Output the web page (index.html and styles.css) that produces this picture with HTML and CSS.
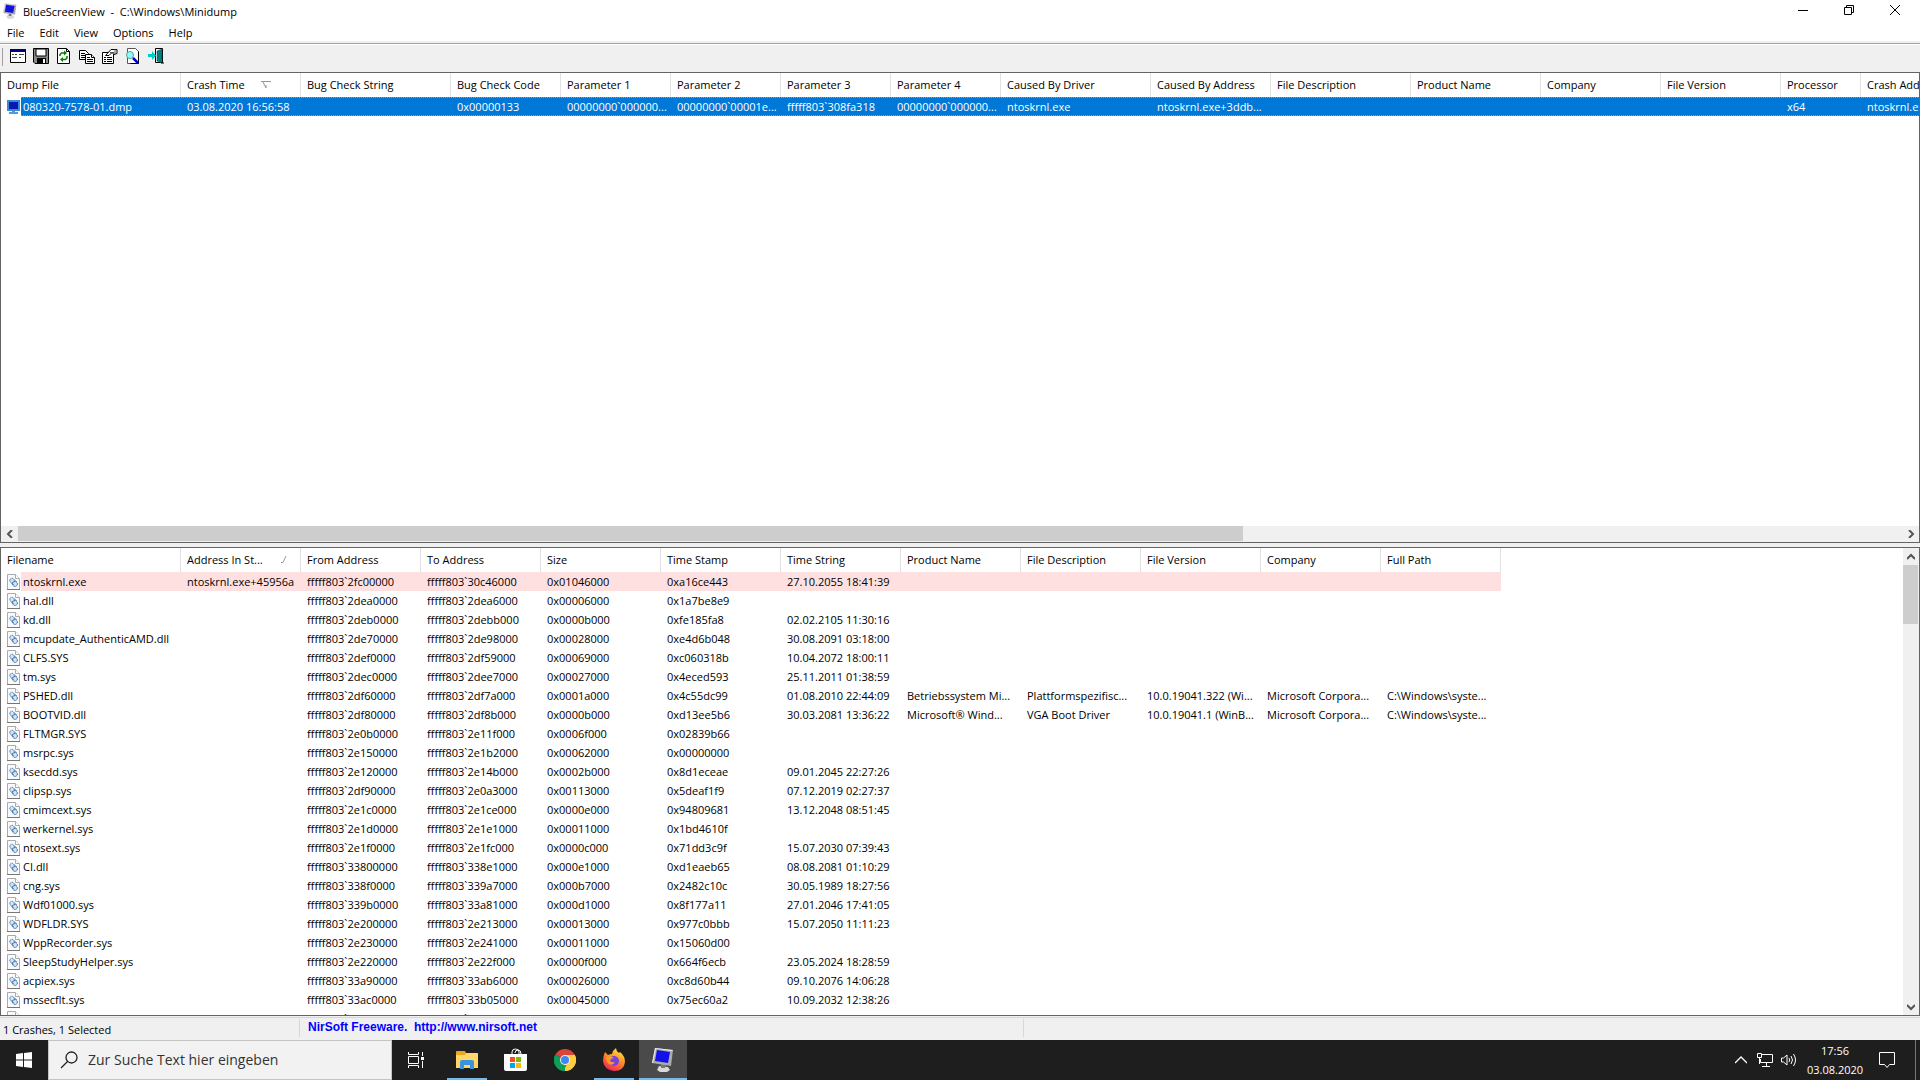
FILE: index.html
```html
<!DOCTYPE html>
<html lang="de">
<head>
<meta charset="utf-8">
<title>BlueScreenView</title>
<link rel="stylesheet" href="styles.css">
</head>
<body>
<svg class="defs" aria-hidden="true">
  <symbol id="monitor" viewBox="0 0 22 24">
    <path d="M7 18l9 1 2 3-3 2H8l-3-2z" fill="#d8d8d8"/>
    <path d="M9 16h5l-1 4H9z" fill="#777"/>
    <path d="M3 0l18 2-2 16L0 15z" fill="#aaa"/>
    <path d="M3 0l18 2-1 1L4 1 1 15H0z" fill="#eee"/>
    <path d="M5 2l13 2-2 11-13-2z" fill="#1212e8"/>
  </symbol>
  <symbol id="dll" viewBox="0 0 13 16">
    <path d="M.5.5h8l4 4v11H.5z" fill="#fafafa" stroke="#aaa"/>
    <path d="M8.500.5v4h4" fill="#fff" stroke="#aaa"/>
    <path d="M0 15.500h13" stroke="#777"/>
    <circle cx="5" cy="6.500" r="2.200" fill="#d5e5f5" stroke="#2f69a3" stroke-dasharray="1.200 .6"/>
    <circle cx="8" cy="10" r="2.400" fill="#d5e5f5" stroke="#1f5a96" stroke-dasharray="1.200 .6"/>
    <path d="M4.500 9l2 2M7.500 6.500l2 1" stroke="#2f69a3"/>
  </symbol>
</svg>

<main class="window">
  <header class="titlebar">
    <svg class="app-icon"><use href="#monitor"/></svg>
    <h1 class="title">BlueScreenView&nbsp; - &nbsp;C:\Windows\Minidump</h1>
    <button class="win-btn" aria-label="Minimieren"><svg width="10" height="10"><path d="M0 5.500h10" stroke="#000"/></svg></button>
    <button class="win-btn" aria-label="Verkleinern"><svg width="10" height="10" fill="none" stroke="#000"><path d="M.5 2.500h7v7h-7zM2.500 2.500v-2h7v7h-2"/></svg></button>
    <button class="win-btn" aria-label="Schließen"><svg width="10" height="10"><path d="M0 0l10 10M10 0L0 10" stroke="#000"/></svg></button>
  </header>
  <nav class="menubar">
    <button>File</button><button>Edit</button><button>View</button><button>Options</button><button>Help</button>
  </nav>
  <div class="toolbar">
    <button aria-label="Advanced Options"><svg viewBox="0 0 16 16"><path d="M.5 1.500h15v13H.5z" fill="#fff" stroke="#000"/><path d="M0 1h16v3H0z" fill="#000080"/><path d="M2 6.500h2m1 0h2m2 0h5M2 9.500h5m2 0h2" stroke="#444"/></svg></button>
    <button aria-label="Save"><svg viewBox="0 0 16 16"><path d="M.5.5h15v15H2l-1.500-1.500z" fill="#888" stroke="#000"/><path d="M3 1h10v7H3z" fill="#fff" stroke="#000"/><path d="M4 10h9v5H4z" fill="#000"/><path d="M10 11h2v4h-2z" fill="#fff"/></svg></button>
    <button aria-label="Refresh"><svg viewBox="0 0 16 16"><path d="M1.500.5h9l3 3v12h-12z" fill="#fff" stroke="#000"/><path d="M10.500.5v3h3" fill="none" stroke="#000"/><path d="M4 8V6.500L5.500 5H9M11 8v2l-1.500 1.500H6" fill="none" stroke="#008000" stroke-width="1.500"/><path d="M8 2.500v5L11 5zM7 9v5l-3-2.500z" fill="#008000"/></svg></button>
    <button aria-label="Copy"><svg viewBox="0 0 16 16" fill="#fff" stroke="#000"><path d="M.5 2.500h6l3 3v6h-9z"/><path d="M2 5.500h4M2 7.500h5M2 9.500h4"/><path d="M6.500 6.500h6l3 3v6h-9z"/><path d="M12.500 6.500v3h3M8 9.500h3M8 11.500h6M8 13.500h6"/></svg></button>
    <button aria-label="Properties"><svg viewBox="0 0 16 16" fill="#fff" stroke="#000"><path d="M.5 4.500h11v11H.5z"/><path d="M2 9.500h2m1 0h5M2 11.500h2m1 0h5M2 13.500h2m1 0h5"/><path d="M3.500 7.500L9 1.500h6v4l-3 1-2-2-3 3z"/><path d="M8 4.500h4M13 1v5" stroke="#555"/></svg></button>
    <button aria-label="Find"><svg viewBox="0 0 16 16"><path d="M2.500.5h8l3 3v12h-11z" fill="#fff" stroke="#555"/><path d="M13.500 3.500v12h-8" fill="none" stroke="#000"/><circle cx="5" cy="7" r="3.500" fill="#8ff" stroke="#698"/><path d="M8 10l5 5" stroke="#0000d0" stroke-width="2.500"/></svg></button>
    <button aria-label="Exit"><svg viewBox="0 0 16 16"><path d="M7.500.5h7v14h-7z" fill="#fff" stroke="#000"/><path d="M9 3l5-2v14l-5-2z" fill="#008080" stroke="#044" stroke-width=".5"/><path d="M0 6h4V3l4 4.500L4 12V9H0z" fill="#0cc"/><path d="M13 15h3" stroke="#000"/></svg></button>
  </div>

  <section class="pane pane-top">
    <div class="list">
      <table>
        <colgroup><col class="w180"><col class="w120"><col class="w150"><col class="w110"><col class="w110"><col class="w110"><col class="w110"><col class="w110"><col class="w150"><col class="w120"><col class="w140"><col class="w130"><col class="w120"><col class="w120"><col class="w80"><col class="w120"></colgroup>
        <thead><tr><th>Dump File</th><th><span class="sorted">Crash Time<svg width="11" height="8" fill="none" stroke="#999"><path d="M0 .5h10M2 1l3 6V4"/></svg></span></th><th>Bug Check String</th><th>Bug Check Code</th><th>Parameter 1</th><th>Parameter 2</th><th>Parameter 3</th><th>Parameter 4</th><th>Caused By Driver</th><th>Caused By Address</th><th>File Description</th><th>Product Name</th><th>Company</th><th>File Version</th><th>Processor</th><th>Crash Address</th></tr></thead>
        <tbody>
          <tr class="selected"><td><span class="name"><svg viewBox="0 0 13 16"><path d="M0 1h13v11H0z" fill="#3a8ad0"/><path d="M2 3h9v7H2z" fill="#0818b0"/><path d="M5 12h3v1h3v2H2v-2h3z" fill="#4c9be0"/></svg>080320-7578-01.dmp</span></td><td>03.08.2020 16:56:58</td><td></td><td>0x00000133</td><td>00000000`000000...</td><td>00000000`00001e...</td><td>fffff803`308fa318</td><td>00000000`000000...</td><td>ntoskrnl.exe</td><td>ntoskrnl.exe+3ddb...</td><td></td><td></td><td></td><td></td><td>x64</td><td>ntoskrnl.exe+3ddb</td></tr>
        </tbody>
      </table>
    </div>
    <div class="scroll-h">
      <button aria-label="Nach links"><svg width="8" height="8"><path d="M6 0L2 4l4 4" /></svg></button>
      <div class="track"><div class="thumb"></div></div>
      <button aria-label="Nach rechts"><svg width="8" height="8"><path d="M2 0l4 4-4 4"/></svg></button>
    </div>
  </section>

  <section class="pane pane-bottom">
    <div class="list">
      <table>
        <colgroup><col class="w180"><col class="w120" span="11"></colgroup>
        <thead><tr><th>Filename</th><th><span class="sorted">Address In St...<svg width="6" height="8" fill="none" stroke="#999"><path d="M0 6.500h2L5 0"/></svg></span></th><th>From Address</th><th>To Address</th><th>Size</th><th>Time Stamp</th><th>Time String</th><th>Product Name</th><th>File Description</th><th>File Version</th><th>Company</th><th>Full Path</th></tr></thead>
        <tbody>
          <tr class="crash"><td><span class="name"><svg><use href="#dll"/></svg>ntoskrnl.exe</span></td><td>ntoskrnl.exe+45956a</td><td>fffff803`2fc00000</td><td>fffff803`30c46000</td><td>0x01046000</td><td>0xa16ce443</td><td>27.10.2055 18:41:39</td><td colspan="5"></td></tr>
          <tr><td><span class="name"><svg><use href="#dll"/></svg>hal.dll</span></td><td></td><td>fffff803`2dea0000</td><td>fffff803`2dea6000</td><td>0x00006000</td><td>0x1a7be8e9</td><td></td><td colspan="5"></td></tr>
          <tr><td><span class="name"><svg><use href="#dll"/></svg>kd.dll</span></td><td></td><td>fffff803`2deb0000</td><td>fffff803`2debb000</td><td>0x0000b000</td><td>0xfe185fa8</td><td>02.02.2105 11:30:16</td><td colspan="5"></td></tr>
          <tr><td><span class="name"><svg><use href="#dll"/></svg>mcupdate_AuthenticAMD.dll</span></td><td></td><td>fffff803`2de70000</td><td>fffff803`2de98000</td><td>0x00028000</td><td>0xe4d6b048</td><td>30.08.2091 03:18:00</td><td colspan="5"></td></tr>
          <tr><td><span class="name"><svg><use href="#dll"/></svg>CLFS.SYS</span></td><td></td><td>fffff803`2def0000</td><td>fffff803`2df59000</td><td>0x00069000</td><td>0xc060318b</td><td>10.04.2072 18:00:11</td><td colspan="5"></td></tr>
          <tr><td><span class="name"><svg><use href="#dll"/></svg>tm.sys</span></td><td></td><td>fffff803`2dec0000</td><td>fffff803`2dee7000</td><td>0x00027000</td><td>0x4eced593</td><td>25.11.2011 01:38:59</td><td colspan="5"></td></tr>
          <tr><td><span class="name"><svg><use href="#dll"/></svg>PSHED.dll</span></td><td></td><td>fffff803`2df60000</td><td>fffff803`2df7a000</td><td>0x0001a000</td><td>0x4c55dc99</td><td>01.08.2010 22:44:09</td><td>Betriebssystem Mi...</td><td>Plattformspezifisc...</td><td>10.0.19041.322 (Wi...</td><td>Microsoft Corpora...</td><td>C:\Windows\syste...</td></tr>
          <tr><td><span class="name"><svg><use href="#dll"/></svg>BOOTVID.dll</span></td><td></td><td>fffff803`2df80000</td><td>fffff803`2df8b000</td><td>0x0000b000</td><td>0xd13ee5b6</td><td>30.03.2081 13:36:22</td><td>Microsoft® Wind...</td><td>VGA Boot Driver</td><td>10.0.19041.1 (WinB...</td><td>Microsoft Corpora...</td><td>C:\Windows\syste...</td></tr>
          <tr><td><span class="name"><svg><use href="#dll"/></svg>FLTMGR.SYS</span></td><td></td><td>fffff803`2e0b0000</td><td>fffff803`2e11f000</td><td>0x0006f000</td><td>0x02839b66</td><td></td><td colspan="5"></td></tr>
          <tr><td><span class="name"><svg><use href="#dll"/></svg>msrpc.sys</span></td><td></td><td>fffff803`2e150000</td><td>fffff803`2e1b2000</td><td>0x00062000</td><td>0x00000000</td><td></td><td colspan="5"></td></tr>
          <tr><td><span class="name"><svg><use href="#dll"/></svg>ksecdd.sys</span></td><td></td><td>fffff803`2e120000</td><td>fffff803`2e14b000</td><td>0x0002b000</td><td>0x8d1eceae</td><td>09.01.2045 22:27:26</td><td colspan="5"></td></tr>
          <tr><td><span class="name"><svg><use href="#dll"/></svg>clipsp.sys</span></td><td></td><td>fffff803`2df90000</td><td>fffff803`2e0a3000</td><td>0x00113000</td><td>0x5deaf1f9</td><td>07.12.2019 02:27:37</td><td colspan="5"></td></tr>
          <tr><td><span class="name"><svg><use href="#dll"/></svg>cmimcext.sys</span></td><td></td><td>fffff803`2e1c0000</td><td>fffff803`2e1ce000</td><td>0x0000e000</td><td>0x94809681</td><td>13.12.2048 08:51:45</td><td colspan="5"></td></tr>
          <tr><td><span class="name"><svg><use href="#dll"/></svg>werkernel.sys</span></td><td></td><td>fffff803`2e1d0000</td><td>fffff803`2e1e1000</td><td>0x00011000</td><td>0x1bd4610f</td><td></td><td colspan="5"></td></tr>
          <tr><td><span class="name"><svg><use href="#dll"/></svg>ntosext.sys</span></td><td></td><td>fffff803`2e1f0000</td><td>fffff803`2e1fc000</td><td>0x0000c000</td><td>0x71dd3c9f</td><td>15.07.2030 07:39:43</td><td colspan="5"></td></tr>
          <tr><td><span class="name"><svg><use href="#dll"/></svg>CI.dll</span></td><td></td><td>fffff803`33800000</td><td>fffff803`338e1000</td><td>0x000e1000</td><td>0xd1eaeb65</td><td>08.08.2081 01:10:29</td><td colspan="5"></td></tr>
          <tr><td><span class="name"><svg><use href="#dll"/></svg>cng.sys</span></td><td></td><td>fffff803`338f0000</td><td>fffff803`339a7000</td><td>0x000b7000</td><td>0x2482c10c</td><td>30.05.1989 18:27:56</td><td colspan="5"></td></tr>
          <tr><td><span class="name"><svg><use href="#dll"/></svg>Wdf01000.sys</span></td><td></td><td>fffff803`339b0000</td><td>fffff803`33a81000</td><td>0x000d1000</td><td>0x8f177a11</td><td>27.01.2046 17:41:05</td><td colspan="5"></td></tr>
          <tr><td><span class="name"><svg><use href="#dll"/></svg>WDFLDR.SYS</span></td><td></td><td>fffff803`2e200000</td><td>fffff803`2e213000</td><td>0x00013000</td><td>0x977c0bbb</td><td>15.07.2050 11:11:23</td><td colspan="5"></td></tr>
          <tr><td><span class="name"><svg><use href="#dll"/></svg>WppRecorder.sys</span></td><td></td><td>fffff803`2e230000</td><td>fffff803`2e241000</td><td>0x00011000</td><td>0x15060d00</td><td></td><td colspan="5"></td></tr>
          <tr><td><span class="name"><svg><use href="#dll"/></svg>SleepStudyHelper.sys</span></td><td></td><td>fffff803`2e220000</td><td>fffff803`2e22f000</td><td>0x0000f000</td><td>0x664f6ecb</td><td>23.05.2024 18:28:59</td><td colspan="5"></td></tr>
          <tr><td><span class="name"><svg><use href="#dll"/></svg>acpiex.sys</span></td><td></td><td>fffff803`33a90000</td><td>fffff803`33ab6000</td><td>0x00026000</td><td>0xc8d60b44</td><td>09.10.2076 14:06:28</td><td colspan="5"></td></tr>
          <tr><td><span class="name"><svg><use href="#dll"/></svg>mssecflt.sys</span></td><td></td><td>fffff803`33ac0000</td><td>fffff803`33b05000</td><td>0x00045000</td><td>0x75ec60a2</td><td>10.09.2032 12:38:26</td><td colspan="5"></td></tr>
          <tr><td><span class="name"><svg><use href="#dll"/></svg>SgrmAgent.sys</span></td><td></td><td>fffff803`2e250000</td><td>fffff803`2e26a000</td><td>0x0001a000</td><td>0xa047477f</td><td>27.05.2062 02:42:24</td><td colspan="5"></td></tr>
        </tbody>
      </table>
    </div>
    <div class="scroll-v">
      <button aria-label="Nach oben"><svg width="8" height="8"><path d="M0 6l4-4 4 4"/></svg></button>
      <div class="track"><div class="thumb"></div></div>
      <button aria-label="Nach unten"><svg width="8" height="8"><path d="M0 2l4 4 4-4"/></svg></button>
    </div>
  </section>

  <footer class="status">
    <span class="status-count">1 Crashes, 1 Selected</span>
    <span class="status-link"><a href="http://www.nirsoft.net">NirSoft Freeware.&nbsp; http://www.nirsoft.net</a></span>
    <span class="status-rest"></span>
  </footer>
</main>

<div class="taskbar">
  <button class="task" aria-label="Start"><svg width="16" height="16" fill="#fff"><path d="M0 2l7-1v6.500H0zM8 1l8-1v7.500H8zM0 8.500h7V15l-7-1zM8 8.500h8V16l-8-1z"/></svg></button>
  <label class="search"><svg width="18" height="18" fill="none" stroke="#222" stroke-width="1.300"><circle cx="11.500" cy="6.500" r="5.500"/><path d="M7.500 10.500L1 17"/></svg><input type="text" placeholder="Zur Suche Text hier eingeben" aria-label="Suche"></label>
  <button class="task" aria-label="Taskansicht"><svg width="16" height="16" fill="none" stroke="#fff"><path d="M.5 0v2.500h10V0M.5 16v-2.500h10V16M.5 4.500h10v7H.5zM14.500 0v4M14.500 9v7"/><path d="M13 5h3v3h-3z" fill="#fff" stroke="none"/></svg></button>
  <div class="apps">
    <button class="task open" aria-label="Explorer"><svg width="22" height="20"><path d="M0 2q0-1 1-1h8l1 2h11q1 0 1 1v14H0z" fill="#e9a820"/><path d="M0 5h9l1-2h11q1 0 1 1v14H0z" fill="#ffd667"/><path d="M4 19v-7q0-2 2-2h10q2 0 2 2v7h-4v-4H8v4z" fill="#3a94dd"/></svg></button>
    <button class="task" aria-label="Store"><svg width="24" height="24"><path d="M8 7V4q0-3 3.500-3T15 4v3M11 5q0-3 3-3t3 4" fill="none" stroke="#fff"/><path d="M0 6h23v15q0 2-2 2H2q-2 0-2-2z" fill="#fff"/><path d="M6 9h5v5H6z" fill="#f25022"/><path d="M12 9h5v5h-5z" fill="#7fba00"/><path d="M6 15h5v5H6z" fill="#00a4ef"/><path d="M12 15h5v5h-5z" fill="#ffb900"/></svg></button>
    <button class="task" aria-label="Chrome"><svg width="22" height="22" viewBox="0 0 22 22"><path d="M11 11L1.470 5.500A11 11 0 0 1 20.530 5.500z" fill="#db4437"/><path d="M11 11L20.530 5.500A11 11 0 0 1 11 22z" fill="#ffcd40"/><path d="M11 11v11A11 11 0 0 1 1.470 5.500z" fill="#0f9d58"/><path d="M11 6h9.800a11 11 0 0 1-9.800 16l4.500-8.500z" fill="#ffcd40"/><path d="M1.470 5.500L6.700 13.500 11 16l1.500 0L9.500 22A11 11 0 0 1 1.470 5.500z" fill="#0f9d58"/><circle cx="11" cy="11" r="5" fill="#f1f1f1"/><circle cx="11" cy="11" r="4" fill="#4285f4"/></svg></button>
    <button class="task open" aria-label="Firefox"><svg width="24" height="24"><defs><linearGradient id="ff" x1=".8" y1="0" x2=".3" y2="1"><stop offset="0" stop-color="#fff04a"/><stop offset=".45" stop-color="#ff9320"/><stop offset="1" stop-color="#f0205a"/></linearGradient></defs><path d="M3 4l3 3q2-1 4-1 1-4 4-6 0 3 3 5l1-1q5 4 5 10-1 9-11 9-10-1-11-10Q1 8 3 4z" fill="url(#ff)"/><circle cx="12" cy="13" r="5" fill="#7542e5"/><path d="M4 9q4-2 8 1-3 0-4 3 2 2 5 1-2 4-6 2-3-2-3-7z" fill="#ff9a20"/></svg></button>
    <button class="task open active" aria-label="BlueScreenView"><svg width="22" height="24"><use href="#monitor"/></svg></button>
  </div>
  <div class="tray">
    <button aria-label="Weitere Symbole"><svg width="12" height="8" fill="none" stroke="#fff" stroke-width="1.300"><path d="M0 7l6-6 6 6"/></svg></button>
    <button aria-label="Netzwerk"><svg width="16" height="14" fill="none" stroke="#fff"><path d="M5 1.500h10.500v8H3.500V6M9.500 10v3M5 13.500h8M.5.500h4v4h-4zM2.500 5v6"/></svg></button>
    <button aria-label="Lautstärke"><svg width="16" height="14" fill="none" stroke="#fff"><path d="M.5 5v4h2L6 12V2L2.500 5zM8 5q1.500 2 0 4M10 3q3 4 0 8M12.500 1q4 6 0 12"/></svg></button>
    <time class="clock"><span>17:56</span><span>03.08.2020</span></time>
    <button class="notes" aria-label="Benachrichtigungen"><svg width="16" height="17" fill="none" stroke="#fff"><path d="M.5.500h15v12H10.500L8 15.500 5.500 12.500H.5z"/></svg></button>
  </div>
</div>
</body>
</html>
```

FILE: styles.css
```css
* { box-sizing: border-box; }
body {
  margin: 0;
  height: 100vh;
  display: flex;
  flex-direction: column;
  overflow: hidden;
  font: 11px/18px "Open Sans", sans-serif;
  color: #000;
  background: #fff;
}
button {
  font: inherit;
  color: inherit;
  background: none;
  border: 0;
  padding: 0;
}
svg { display: block; flex: none; }
.defs { position: absolute; width: 0; height: 0; }

.window {
  flex: 1;
  min-height: 0;
  display: flex;
  flex-direction: column;
  background: #f0f0f0;
}

.titlebar {
  display: flex;
  height: 24px;
  padding: 0 2px 0 3px;
  background: #fff;
}
.app-icon { width: 14px; height: 16px; margin: 3px 6px 0 0; }
.title { flex: 1; margin: 0; font-size: 11px; font-weight: 400; line-height: 24px; }
.win-btn { width: 46px; height: 20px; display: flex; align-items: center; justify-content: center; }

.menubar { display: flex; gap: 1px; height: 17px; background: #fff; }
.menubar button { padding: 0 7px; line-height: 18px; }

.toolbar {
  display: flex;
  align-items: flex-start;
  gap: 7px;
  height: 31px;
  padding: 5px 11px 0 2px;
  border-top: 2px solid #f0f0f0;
  box-shadow: inset 0 1px #a0a0a0, inset 0 2px #fff;
}
.toolbar::before { content: ""; width: 1px; height: 18px; background: #a0a0a0; }
.toolbar svg { width: 16px; height: 16px; }

.pane {
  display: flex;
  min-height: 0;
  background: #fff;
  border: 1px solid #646464;
}
.pane-top { flex: 471 1 0; flex-direction: column; margin-bottom: 4px; }
.pane-bottom { flex: 469 1 0; }
.list { flex: 1; min-width: 0; min-height: 0; overflow: hidden; }

table { width: 0; table-layout: fixed; border-collapse: separate; border-spacing: 0; }
.w80 { width: 80px; }
.w110 { width: 110px; }
.w120 { width: 120px; }
.w130 { width: 130px; }
.w140 { width: 140px; }
.w150 { width: 150px; }
.w180 { width: 180px; }
th, td {
  padding: 0 0 0 6px;
  overflow: hidden;
  white-space: nowrap;
  font-weight: 400;
  text-align: left;
}
th { height: 24px; border-right: 1px solid #e2e2e2; }
td { height: 19px; }
.sorted { display: flex; align-items: center; justify-content: space-between; padding-right: 13px; }
.pane-top .sorted { padding-right: 28px; }
.name { display: flex; align-items: center; gap: 3px; height: 19px; }
.name svg { width: 13px; height: 16px; }

.selected { color: #fff; }
.selected td {
  background:
    repeating-linear-gradient(90deg, #e88a2c 0 1px, #0078d7 1px 2px) top / 100% 1px no-repeat,
    repeating-linear-gradient(90deg, #e88a2c 0 1px, #0078d7 1px 2px) bottom / 100% 1px no-repeat,
    #0078d7;
}
.selected td:first-child {
  background:
    linear-gradient(#fff, #fff) left / 20px 100% no-repeat,
    repeating-linear-gradient(90deg, #e88a2c 0 1px, #0078d7 1px 2px) top / 100% 1px no-repeat,
    repeating-linear-gradient(90deg, #e88a2c 0 1px, #0078d7 1px 2px) bottom / 100% 1px no-repeat,
    #0078d7;
}
.crash td { background: #ffe0e0; }
.crash td:first-child { background: linear-gradient(90deg, #fff 20px, #ffe0e0 20px); }

.scroll-h, .scroll-v { display: flex; background: #f0f0f0; }
.scroll-h { height: 16px; }
.scroll-v { width: 16px; flex-direction: column; }
.scroll-h button, .scroll-v button { display: flex; align-items: center; justify-content: center; flex: none; }
.scroll-h button { width: 17px; height: 15px; }
.scroll-v button { width: 15px; height: 17px; }
.scroll-h path, .scroll-v path { fill: none; stroke: #555; stroke-width: 2; }
.track { flex: 1; }
.thumb { background: #cdcdcd; }
.scroll-h .thumb { width: 65%; height: 15px; }
.scroll-v .thumb { width: 15px; height: 59px; }

.status {
  display: flex;
  height: 24px;
  padding-top: 3px;
  box-shadow: inset 0 1px #f0f0f0, inset 0 2px #d7d7d7;
}
.status span { height: 18px; border-right: 1px solid #d7d7d7; }
.status-count { width: 300px; padding-left: 3px; line-height: 21px; }
.status .status-link { width: 724px; padding-left: 8px; line-height: 16px; font-family: "Liberation Sans", sans-serif; font-size: 12px; font-weight: 700; }
.status-link a { color: #00f; text-decoration: none; }
.status .status-rest { flex: 1; border: 0; }

.taskbar {
  display: flex;
  height: 40px;
  flex: none;
  background: #1e1e1e;
  color: #fff;
}
.task { width: 48px; height: 40px; display: flex; align-items: center; justify-content: center; }
.search {
  display: flex;
  align-items: center;
  gap: 10px;
  width: 344px;
  padding-left: 11px;
  background: #f2f2f2;
  border: 1px solid #c4c4c4;
}
.search input {
  flex: 1;
  min-width: 0;
  border: 0;
  padding: 0;
  background: none;
  font: 14px/20px "Open Sans", sans-serif;
}
.search input::placeholder { color: #333; opacity: 1; }
.apps { display: flex; gap: 1px; padding-left: 3px; }
.open { background: linear-gradient(#76b9ed, #76b9ed) center bottom / 40px 2px no-repeat; }
.active { background-color: #4a4a4a; background-size: 48px 2px; }
.tray {
  display: flex;
  align-items: center;
  gap: 8px;
  margin-left: auto;
  margin-right: 4px;
  border-right: 1px solid #777;
}
.tray button:first-child { margin-right: 2px; }
.clock { display: flex; flex-direction: column; width: 60px; text-align: center; line-height: 19px; }
.notes { margin: 0 20px 0 6px; }
```
